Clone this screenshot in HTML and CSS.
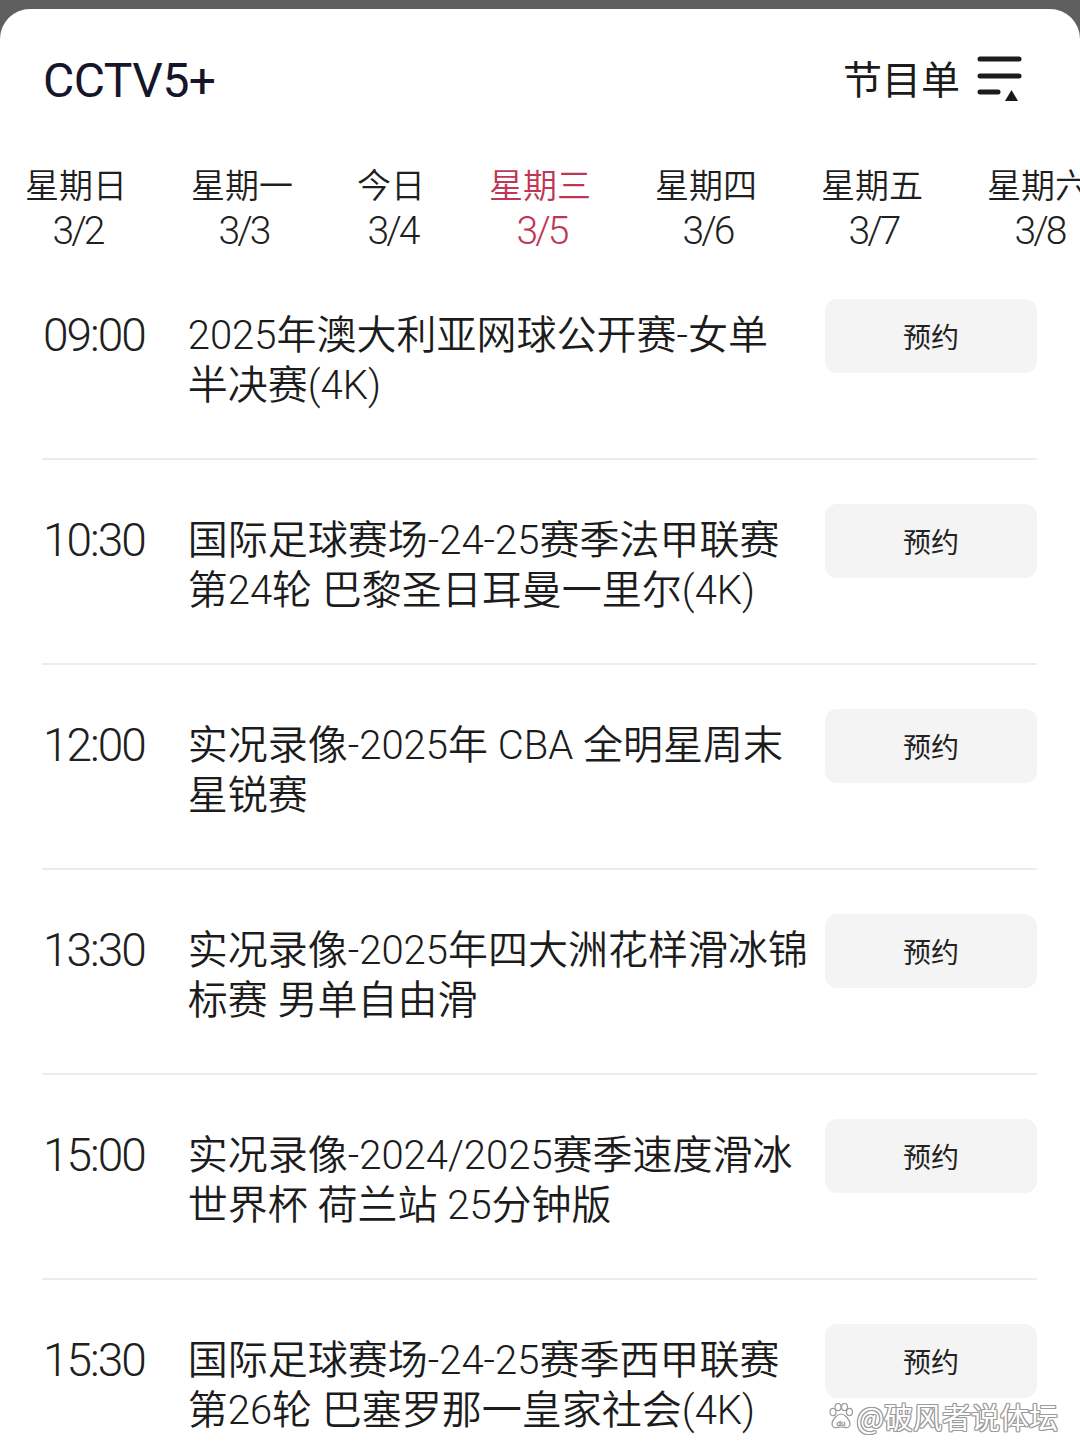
FILE: index.html
```html
<!DOCTYPE html>
<html lang="zh-CN">
<head>
<meta charset="utf-8">
<title>CCTV5+ 节目单</title>
<link rel="stylesheet" href="styles.css">
</head>
<body>
<div class="sheet">
  <header class="header">
    <h1 class="channel">CCTV5+</h1>
    <div class="guide">
      <span class="guide-label">节目单</span>
      <svg class="guide-icon" width="48" height="50" viewBox="0 0 48 50" aria-hidden="true">
        <g stroke="#1b1b1b" stroke-width="5" stroke-linecap="round" fill="none">
          <line x1="4" y1="5" x2="43" y2="5"/>
          <line x1="4" y1="22" x2="43" y2="22"/>
          <line x1="4" y1="38" x2="22" y2="38"/>
        </g>
        <polygon points="29,47 42,47 35.5,36" fill="#1b1b1b"/>
      </svg>
    </div>
  </header>

  <nav class="days">
    <div class="day"><span class="day-name">星期日</span><span class="day-date">3/2</span></div>
    <div class="day"><span class="day-name">星期一</span><span class="day-date">3/3</span></div>
    <div class="day"><span class="day-name">今日</span><span class="day-date">3/4</span></div>
    <div class="day active"><span class="day-name">星期三</span><span class="day-date">3/5</span></div>
    <div class="day"><span class="day-name">星期四</span><span class="day-date">3/6</span></div>
    <div class="day"><span class="day-name">星期五</span><span class="day-date">3/7</span></div>
    <div class="day"><span class="day-name">星期六</span><span class="day-date">3/8</span></div>
  </nav>

  <ul class="programs">
    <li class="program">
      <span class="time">09:00</span>
      <span class="title">2025年澳大利亚网球公开赛-女单<br>半决赛(4K)</span>
      <button class="reserve">预约</button>
    </li>
    <li class="program">
      <span class="time">10:30</span>
      <span class="title">国际足球赛场-24-25赛季法甲联赛<br>第24轮 巴黎圣日耳曼一里尔(4K)</span>
      <button class="reserve">预约</button>
    </li>
    <li class="program">
      <span class="time">12:00</span>
      <span class="title">实况录像-2025年 CBA 全明星周末<br>星锐赛</span>
      <button class="reserve">预约</button>
    </li>
    <li class="program">
      <span class="time">13:30</span>
      <span class="title">实况录像-2025年四大洲花样滑冰锦<br>标赛 男单自由滑</span>
      <button class="reserve">预约</button>
    </li>
    <li class="program">
      <span class="time">15:00</span>
      <span class="title">实况录像-2024/2025赛季速度滑冰<br>世界杯 荷兰站 25分钟版</span>
      <button class="reserve">预约</button>
    </li>
    <li class="program">
      <span class="time">15:30</span>
      <span class="title">国际足球赛场-24-25赛季西甲联赛<br>第26轮 巴塞罗那一皇家社会(4K)</span>
      <button class="reserve">预约</button>
    </li>
  </ul>

  <div class="watermark">
    <svg class="paw" width="24" height="26" viewBox="0 0 24 26" aria-hidden="true">
      <g fill="#fff" stroke="#9a9a9a" stroke-width="1.2">
        <ellipse cx="4" cy="9" rx="3" ry="3.6"/>
        <ellipse cx="9" cy="4" rx="3" ry="3.6"/>
        <ellipse cx="15.5" cy="4" rx="3" ry="3.6"/>
        <ellipse cx="20.5" cy="9" rx="3" ry="3.6"/>
        <path d="M12 11 C8 11 3 17 3 21 C3 24.5 6 25 8 24.5 C10 24 14 24 16 24.5 C18 25 21 24.5 21 21 C21 17 16 11 12 11 Z"/>
      </g>
      <text x="12" y="22.5" text-anchor="middle" font-family="Roboto, sans-serif" font-size="8" fill="#fff" stroke="#9a9a9a" stroke-width="0.6">du</text>
    </svg>
    <span class="wm-text">@破风者说体坛</span>
  </div>
</div>
</body>
</html>
```

FILE: styles.css
```css
html, body {
  margin: 0;
  padding: 0;
}

body {
  width: 1080px;
  height: 1456px;
  overflow: hidden;
  background: #5f5f5f;
  font-family: Roboto, "Noto Sans CJK SC", sans-serif;
  color: #1c1c1c;
}

.sheet {
  position: relative;
  margin-top: 9px;
  height: 1447px;
  background: #ffffff;
  border-radius: 30px 30px 0 0;
  overflow: hidden;
}

/* Header */
.header {
  height: 142px;
  display: flex;
  align-items: center;
  justify-content: space-between;
  padding: 0 56px 0 43px;
  box-sizing: border-box;
}

.channel {
  margin: 0;
  font-size: 48px;
  font-weight: 400;
  color: #16162a;
  letter-spacing: -0.5px;
}

.guide {
  display: flex;
  align-items: center;
  gap: 16px;
  margin-bottom: 6px;
}

.guide-label {
  font-size: 39px;
  color: #1b1b1b;
}

.guide-icon {
  display: block;
  margin-top: 4px;
}

/* Day tabs */
.days {
  display: flex;
  gap: 64px;
  padding: 13px 0 0 25px;
  white-space: nowrap;
}

.day {
  display: flex;
  flex-direction: column;
  align-items: center;
  flex: none;
  color: #1f1f1f;
}

.day-name {
  font-size: 34px;
  line-height: 44px;
  font-weight: 350;
}

.day-date {
  font-size: 39px;
  line-height: 47px;
  font-weight: 300;
  letter-spacing: -3px;
  margin-right: -3px;
}

.day.active {
  color: #c03654;
}

/* Program list */
.programs {
  list-style: none;
  margin: 0;
  padding: 0 43px 0 42px;
}

.program {
  display: flex;
  align-items: flex-start;
  height: 205px;
  box-sizing: border-box;
  padding-top: 44px;
  border-bottom: 2px solid #ececec;
}

.time {
  flex: none;
  margin: 11px 0 0 1px;
  font-size: 46px;
  line-height: 50px;
  font-weight: 300;
  letter-spacing: -2px;
  color: #202020;
}

.title {
  flex: 1;
  min-width: 0;
  margin: 12px 0 0 43px;
  font-size: 40px;
  line-height: 50px;
  font-weight: 350;
  white-space: nowrap;
  color: #1c1c1c;
}

.reserve {
  flex: none;
  width: 212px;
  height: 74px;
  border: none;
  border-radius: 12px;
  background: #f4f4f4;
  font-family: "Noto Sans CJK SC", sans-serif;
  font-size: 28px;
  color: #222222;
  padding: 0;
}

/* Watermark overlay */
.watermark {
  position: absolute;
  right: 22px;
  bottom: 22px;
  display: flex;
  align-items: center;
  gap: 4px;
}

.paw {
  display: block;
}

.wm-text {
  font-family: "Noto Sans CJK SC", sans-serif;
  font-size: 29px;
  line-height: 36px;
  color: #ffffff;
  text-shadow:
    1px 0 0 #9a9a9a,
    -1px 0 0 #9a9a9a,
    0 1px 0 #9a9a9a,
    0 -1px 0 #9a9a9a,
    1px 1px 0 #9a9a9a,
    -1px -1px 0 #9a9a9a,
    1px -1px 0 #9a9a9a,
    -1px 1px 0 #9a9a9a;
}
```
